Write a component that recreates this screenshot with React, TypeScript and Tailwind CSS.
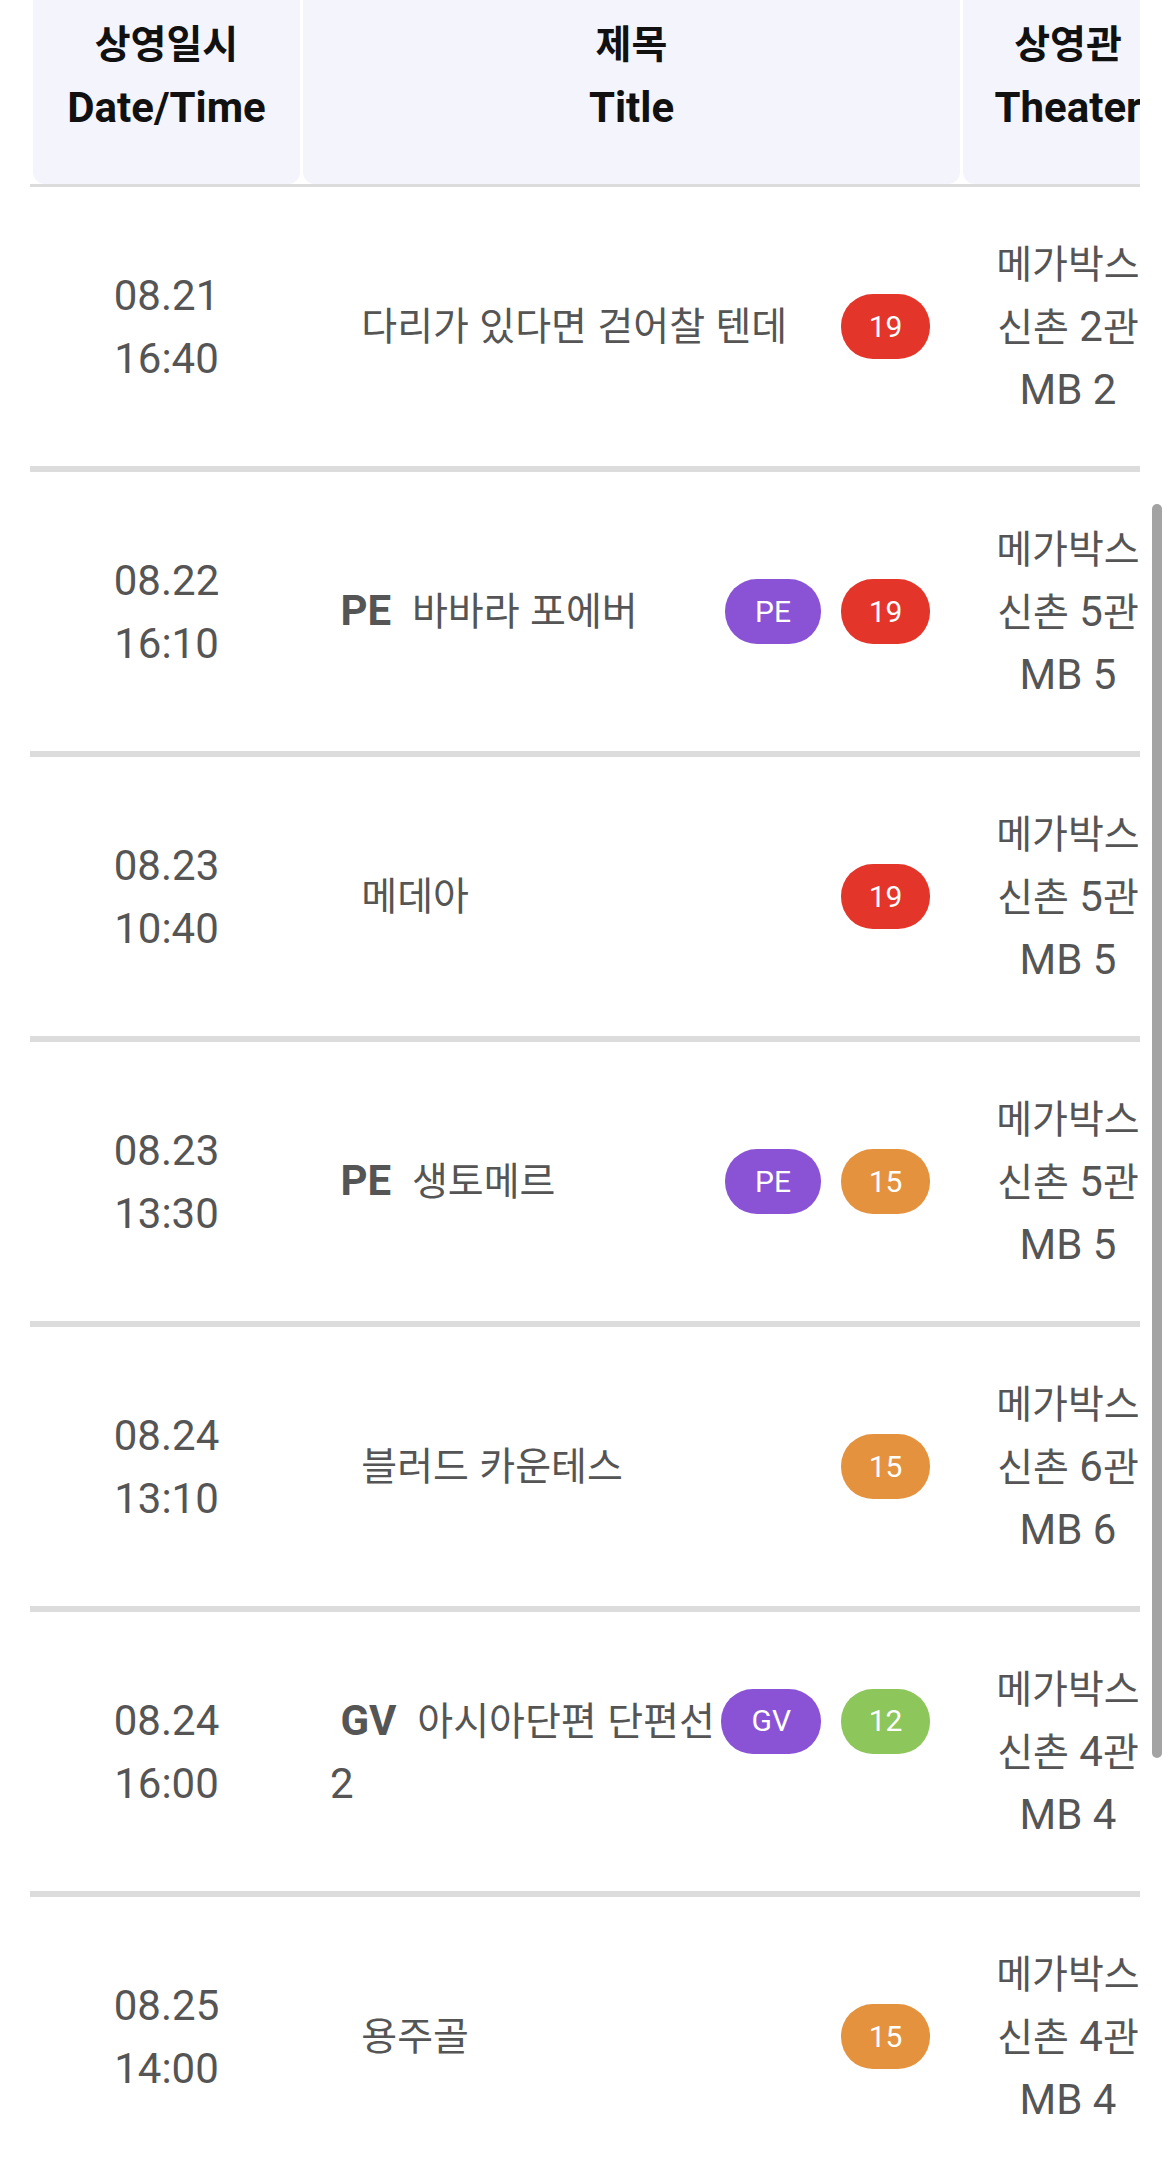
import React, { Fragment } from "react";

type Row = {
  date: string;
  time: string;
  prefix?: string;
  title: string;
  tail?: string;
  special?: string;
  rating: string;
  theater: string;
  mb: string;
};

const rows: Row[] = [
  { date: "08.21", time: "16:40", title: "다리가 있다면 걷어찰 텐데", rating: "19", theater: "신촌 2관", mb: "MB 2" },
  { date: "08.22", time: "16:10", prefix: "PE", title: "바바라 포에버", special: "PE", rating: "19", theater: "신촌 5관", mb: "MB 5" },
  { date: "08.23", time: "10:40", title: "메데아", rating: "19", theater: "신촌 5관", mb: "MB 5" },
  { date: "08.23", time: "13:30", prefix: "PE", title: "생토메르", special: "PE", rating: "15", theater: "신촌 5관", mb: "MB 5" },
  { date: "08.24", time: "13:10", title: "블러드 카운테스", rating: "15", theater: "신촌 6관", mb: "MB 6" },
  { date: "08.24", time: "16:00", prefix: "GV", title: "아시아단편 단편선", tail: "2", special: "GV", rating: "12", theater: "신촌 4관", mb: "MB 4" },
  { date: "08.25", time: "14:00", title: "용주골", rating: "15", theater: "신촌 4관", mb: "MB 4" },
];

function K({ s }: { s: string }) {
  const parts = s.split(/([\uAC00-\uD7A3]+)/);
  return (
    <>
      {parts.map((p, i) =>
        /[\uAC00-\uD7A3]/.test(p) ? (
          <span key={i} className="text-[39px] leading-none">
            {p}
          </span>
        ) : (
          <Fragment key={i}>{p}</Fragment>
        )
      )}
    </>
  );
}

function RatingBadge({ r }: { r: string }) {
  const cls =
    r === "19"
      ? "bg-[#e4352a]"
      : r === "15"
      ? "bg-[#e5923f]"
      : "bg-[#8dc65a]";
  return (
    <div className={`${cls} flex h-[65px] w-[89px] flex-none items-center justify-center rounded-[32px] text-[30px] leading-none text-white`}>
      {r}
    </div>
  );
}

function SpecialBadge({ s }: { s: string }) {
  return (
    <div className="flex h-[65px] flex-none items-center justify-center rounded-[32px] bg-[#8a53d6] px-[30px] text-[30px] leading-none text-white">
      {s}
    </div>
  );
}

export default function App() {
  return (
    <div className="relative h-[2172px] w-[1170px] overflow-hidden bg-white font-['Roboto','Noto_Sans_CJK_KR',sans-serif]">
      <div className="pl-[30px]">
        <div className="w-[1110px] overflow-hidden">
          <div className="w-[1200px]">
            {/* Header */}
            <div className="flex gap-[3px] border-b-[3px] border-[#dcdcdc] pl-[3px] text-[42px] font-bold leading-[64px] text-[#111]">
              <div className="w-[267px] rounded-b-[12px] bg-[#f4f5fc] pb-[44px] pt-[12px] text-center">
                <div className="h-[64px]"><K s="상영일시" /></div>
                <div className="h-[64px]">Date/Time</div>
              </div>
              <div className="w-[657px] rounded-b-[12px] bg-[#f4f5fc] pb-[44px] pt-[12px] text-center">
                <div className="h-[64px]"><K s="제목" /></div>
                <div className="h-[64px]">Title</div>
              </div>
              <div className="w-[210px] rounded-b-[12px] bg-[#f4f5fc] pb-[44px] pt-[12px] text-center">
                <div className="h-[64px]"><K s="상영관" /></div>
                <div className="h-[64px]">Theater</div>
              </div>
            </div>
            {/* Body */}
            {rows.map((r, i) => (
              <div
                key={i}
                className="flex h-[285px] gap-[3px] border-b-[6px] border-[#dcdcdc] pl-[3px] text-[42px] leading-[63px] text-[#555]"
              >
                <div className="flex w-[267px] flex-col items-center justify-center">
                  <div className="h-[63px]">{r.date}</div>
                  <div className="h-[63px]">{r.time}</div>
                </div>
                <div className="flex w-[657px] items-center pl-[27px] pr-[30px]">
                  <div className="flex w-full items-start">
                    <div className="min-w-0 flex-1">
                      <span className="whitespace-nowrap">
                        {r.prefix ? (
                          <>
                            {"\u00a0"}
                            <span className="font-bold">{r.prefix}</span>
                            {"\u00a0\u00a0"}
                          </>
                        ) : (
                          "\u00a0\u00a0\u00a0"
                        )}
                        <K s={r.title} />
                      </span>
                      {r.tail && <> {r.tail}</>}
                    </div>
                    <div className="flex flex-none gap-[20px]">
                      {r.special && <SpecialBadge s={r.special} />}
                      <RatingBadge r={r.rating} />
                    </div>
                  </div>
                </div>
                <div className="flex w-[210px] flex-col items-center justify-center text-center">
                  <div className="h-[63px] whitespace-nowrap"><K s="메가박스" /></div>
                  <div className="h-[63px] whitespace-nowrap"><K s={r.theater} /></div>
                  <div className="h-[63px] whitespace-nowrap">{r.mb}</div>
                </div>
              </div>
            ))}
          </div>
        </div>
      </div>
      {/* scroll indicator */}
      <div className="absolute left-[1152px] top-[504px] h-[1254px] w-[10px] rounded-full bg-[#a3a3a3]" />
    </div>
  );
}
